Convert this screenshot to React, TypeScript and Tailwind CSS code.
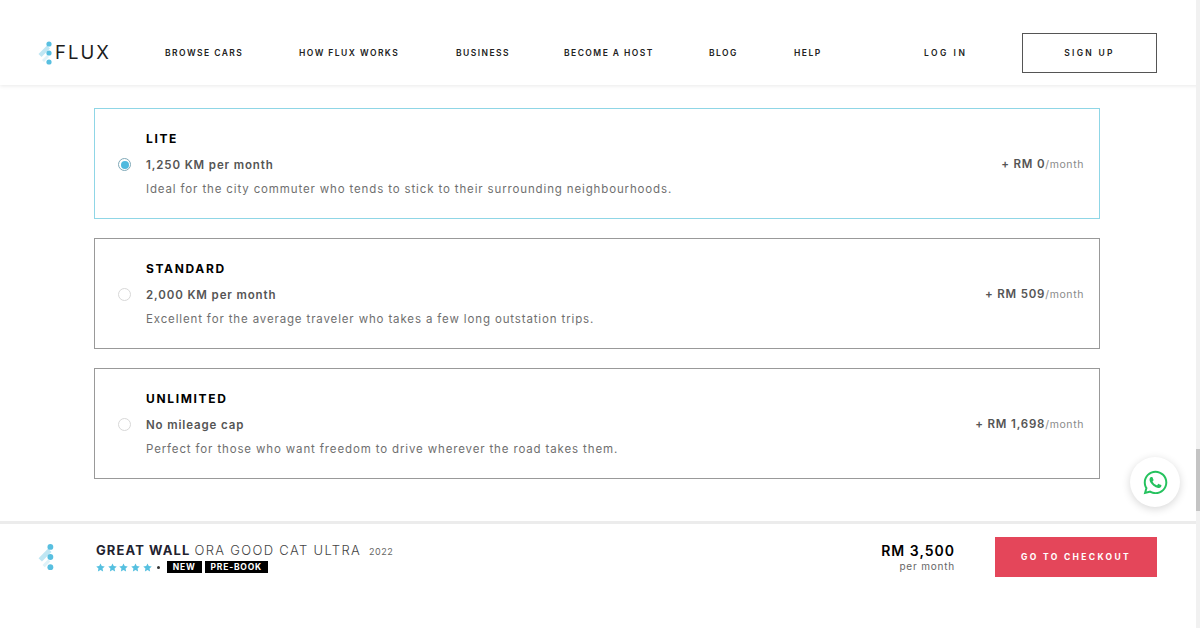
import { FaWhatsapp } from "react-icons/fa"

const font = { fontFamily: "Inter, 'Liberation Sans', sans-serif" }

const navLinks = [
  { label: "BROWSE CARS", width: "w-[134px]" },
  { label: "HOW FLUX WORKS", width: "w-[157px]" },
  { label: "BUSINESS", width: "w-[108px]" },
  { label: "BECOME A HOST", width: "w-[145px]" },
  { label: "BLOG", width: "w-[85px]" },
  { label: "HELP", width: "w-[60px]" },
]

const plans = [
  {
    name: "LITE",
    mileage: "1,250 KM per month",
    description: "Ideal for the city commuter who tends to stick to their surrounding neighbourhoods.",
    price: "+ RM 0",
    selected: true,
  },
  {
    name: "STANDARD",
    mileage: "2,000 KM per month",
    description: "Excellent for the average traveler who takes a few long outstation trips.",
    price: "+ RM 509",
    selected: false,
  },
  {
    name: "UNLIMITED",
    mileage: "No mileage cap",
    description: "Perfect for those who want freedom to drive wherever the road takes them.",
    price: "+ RM 1,698",
    selected: false,
  },
]

function LogoMark({ large = false }: { large?: boolean }) {
  return (
    <svg width={large ? 18 : 16} height={large ? 30 : 26} viewBox="0 0 16 26" className="shrink-0">
      <path d="M0.5 14 L9 5.5 L12 8.5 L3.5 17 Z" fill="#bfe6f3" />
      <path d="M4 20 L9 15 L11 17 L6 22 Z" fill="#dff2f8" />
      <circle cx="11" cy="4" r="2.6" fill="#58bfe0" />
      <circle cx="11" cy="13" r="2.6" fill="#58bfe0" />
      <circle cx="11" cy="22" r="2.6" fill="#58bfe0" />
    </svg>
  )
}

function Star() {
  return (
    <svg width="9" height="9" viewBox="0 0 24 24" fill="#56c0e0">
      <path d="M12 1l3.4 7.3 7.9 1-5.8 5.5 1.5 7.9L12 18.8l-7 3.9 1.5-7.9L.7 9.3l7.9-1z" />
    </svg>
  )
}

export default function App() {
  return (
    <div style={font} className="relative h-[628px] w-[1200px] overflow-hidden bg-white">
      <header className="relative z-10 flex h-[85px] items-center bg-white pl-[38px] pr-[43px] pt-[21px] shadow-[0_1px_4px_rgba(0,0,0,0.09)]">
        <div className="flex w-[127px] items-center">
          <LogoMark />
          <span className="ml-px text-[18.5px] font-normal tracking-[2px] text-[#1c1c1c]">FLUX</span>
        </div>
        <nav className="flex">
          {navLinks.map((link) => (
            <a key={link.label} className={`${link.width} text-[8.5px] font-semibold tracking-[1.45px] text-[#222]`}>
              {link.label}
            </a>
          ))}
        </nav>
        <a className="ml-[70px] text-[8.5px] font-semibold tracking-[2.5px] text-[#222]">LOG IN</a>
        <button className="ml-auto h-[40px] w-[135px] border border-[#555] text-[8.5px] font-semibold tracking-[2.3px] text-[#222]">
          SIGN UP
        </button>
      </header>

      <main className="ml-[94px] flex w-[1006px] flex-col gap-[19px] pt-[23px]">
        {plans.map((plan) => (
          <div
            key={plan.name}
            className={`flex h-[111px] items-center border pl-[23px] pr-[15px] ${
              plan.selected ? "border-[#8fd6e6]" : "border-[#999]"
            }`}
          >
            <span
              className={`mt-[2px] flex h-[13px] w-[13px] shrink-0 items-center justify-center rounded-full border ${
                plan.selected ? "border-[#7fa9b8]" : "border-[#d8d8d8]"
              }`}
            >
              {plan.selected && <span className="h-[8px] w-[8px] rounded-full bg-[#4fb9de]" />}
            </span>
            <div className="ml-[15px] flex-1">
              <div className="text-[12px] font-bold leading-[16px] tracking-[1.65px] text-black">{plan.name}</div>
              <div className="mt-[10px] text-[11.5px] font-semibold leading-[16px] tracking-[0.87px] text-[#555]">{plan.mileage}</div>
              <div className="mt-[8px] text-[11.5px] leading-[16px] tracking-[0.86px] text-[#6f6f6f]">{plan.description}</div>
            </div>
            <div className="pt-[2px] text-[11.5px] font-semibold tracking-[0.8px] text-[#555]">
              {plan.price}
              <span className="text-[10.5px] font-normal tracking-[0.6px] text-[#8a8a8a]">/month</span>
            </div>
          </div>
        ))}
      </main>

      <footer className="absolute bottom-0 left-0 flex h-[107px] w-full items-start border-t-[3px] border-[#ececec] bg-white pl-[38px] pr-[43px] pt-[13px]">
        <div className="mt-[5px] w-[58px]">
          <LogoMark large />
        </div>
        <div className="pt-[4px]">
          <div className="flex items-baseline text-[13px] leading-[18px] tracking-[1.1px] text-[#444]">
            <span className="font-bold text-[#1f2230]">GREAT WALL</span>
            <span className="ml-[4px] font-light tracking-[1.33px]">ORA GOOD CAT ULTRA</span>
            <span className="ml-[8px] text-[9px] tracking-[0.5px] text-[#666]">2022</span>
          </div>
          <div className="flex items-center">
            <div className="flex gap-[2.7px]">
              <Star />
              <Star />
              <Star />
              <Star />
              <Star />
            </div>
            <span className="ml-[5px] mr-[7px] h-[3px] w-[3px] rounded-full bg-[#333]" />
            <span className="w-[35px] bg-black text-center text-[8.5px] font-bold leading-[12px] tracking-[0.8px] text-white">NEW</span>
            <span className="ml-[3px] w-[63px] bg-black text-center text-[8.5px] font-bold leading-[12px] tracking-[0.8px] text-white">PRE-BOOK</span>
          </div>
        </div>
        <div className="ml-auto mr-[40px] pt-[5px] text-right">
          <div className="text-[14px] font-semibold leading-[18px] tracking-[1px] text-black">RM 3,500</div>
          <div className="-mt-px text-[10px] leading-[14px] tracking-[0.8px] text-[#666]">per month</div>
        </div>
        <button className="h-[40px] w-[162px] bg-[#e4465a] text-[8.5px] font-bold tracking-[2.35px] text-white">
          GO TO CHECKOUT
        </button>
      </footer>

      <div className="absolute left-[1130px] top-[457px] z-20 flex h-[50px] w-[50px] items-center justify-center rounded-full bg-white shadow-[0_2px_8px_rgba(0,0,0,0.16)]">
        <FaWhatsapp className="text-[27px] text-[#25c25e]" />
      </div>

      <div className="absolute right-0 top-0 z-30 h-full w-[4px] bg-[#f1f1f1]">
        <div className="mt-[449px] h-[62px] w-full bg-[#c4c4c4]" />
      </div>
    </div>
  )
}
